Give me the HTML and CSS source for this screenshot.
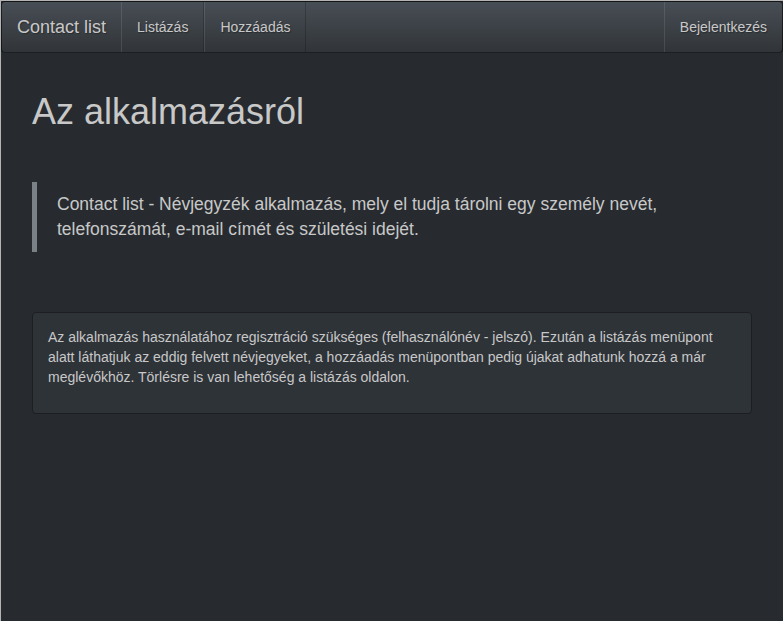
FILE: index.html
```html
<!DOCTYPE html>
<html lang="hu">
<head>
<meta charset="utf-8">
<title>Contact list</title>
<link rel="stylesheet" href="styles.css">
</head>
<body>
<div class="frame">
  <nav class="navbar">
    <a class="brand" href="#">Contact list</a>
    <ul class="nav">
      <li><a href="#">Listázás</a></li>
      <li><a href="#">Hozzáadás</a></li>
    </ul>
    <ul class="nav nav-right">
      <li><a href="#">Bejelentkezés</a></li>
    </ul>
  </nav>
  <main class="container">
    <h1>Az alkalmazásról</h1>
    <blockquote>Contact list - Névjegyzék alkalmazás, mely el tudja tárolni egy személy nevét, telefonszámát, e-mail címét és születési idejét.</blockquote>
    <div class="panel">
      <p>Az alkalmazás használatához regisztráció szükséges (felhasználónév - jelszó). Ezután a listázás menüpont alatt láthatjuk az eddig felvett névjegyeket, a hozzáadás menüpontban pedig újakat adhatunk hozzá a már meglévőkhöz. Törlésre is van lehetőség a listázás oldalon.</p>
    </div>
  </main>
</div>
</body>
</html>
```
FILE: styles.css
```css
* { box-sizing: border-box; }
html, body {
  margin: 0;
  height: 100%;
  background: #272b30;
}
body {
  font-family: "Liberation Sans", Arial, sans-serif;
  font-size: 14px;
  line-height: 1.42857;
  color: #c8c8c8;
}
.frame {
  min-height: 100%;
  border-top: 1px solid #b4b4b4;
  border-left: 1px solid #b4b4b4;
  background: #272b30;
}
.navbar {
  display: flex;
  height: 52px;
  background-image: linear-gradient(#484e55, #3a3f44 60%, #313539);
  border: 1px solid rgba(0, 0, 0, 0.6);
  border-radius: 4px;
  margin-bottom: 20px;
}
.brand {
  display: block;
  padding: 15px 15px;
  font-size: 18px;
  line-height: 20px;
  color: #c8c8c8;
  text-decoration: none;
  text-shadow: 1px 1px 1px rgba(0, 0, 0, 0.3);
}
.nav {
  display: flex;
  list-style: none;
  margin: 0;
  padding: 0;
}
.nav-right { margin-left: auto; }
.nav a {
  display: block;
  height: 50px;
  padding: 15px 15px;
  line-height: 20px;
  color: #c8c8c8;
  text-decoration: none;
  border-left: 1px solid rgba(255, 255, 255, 0.1);
  border-right: 1px solid rgba(0, 0, 0, 0.2);
  text-shadow: 1px 1px 1px rgba(0, 0, 0, 0.3);
}
.nav-right a { border-right: 0; }
.container {
  width: 750px;
  margin: 0 auto;
  padding: 0 15px;
}
h1 {
  margin: 39px 0 0;
  font-size: 36px;
  font-weight: 500;
  line-height: 1.1;
  color: #c8c8c8;
}
blockquote {
  margin: 50px 0 0;
  padding: 10px 20px;
  border-left: 5px solid #7a8288;
  font-size: 17.5px;
  line-height: 25px;
}
.panel {
  margin-top: 60px;
  background: #2e3338;
  border: 1px solid #1c1e22;
  border-radius: 4px;
  padding: 15px 15px 15px;
}
.panel p {
  margin: 0 0 10px;
}
```
